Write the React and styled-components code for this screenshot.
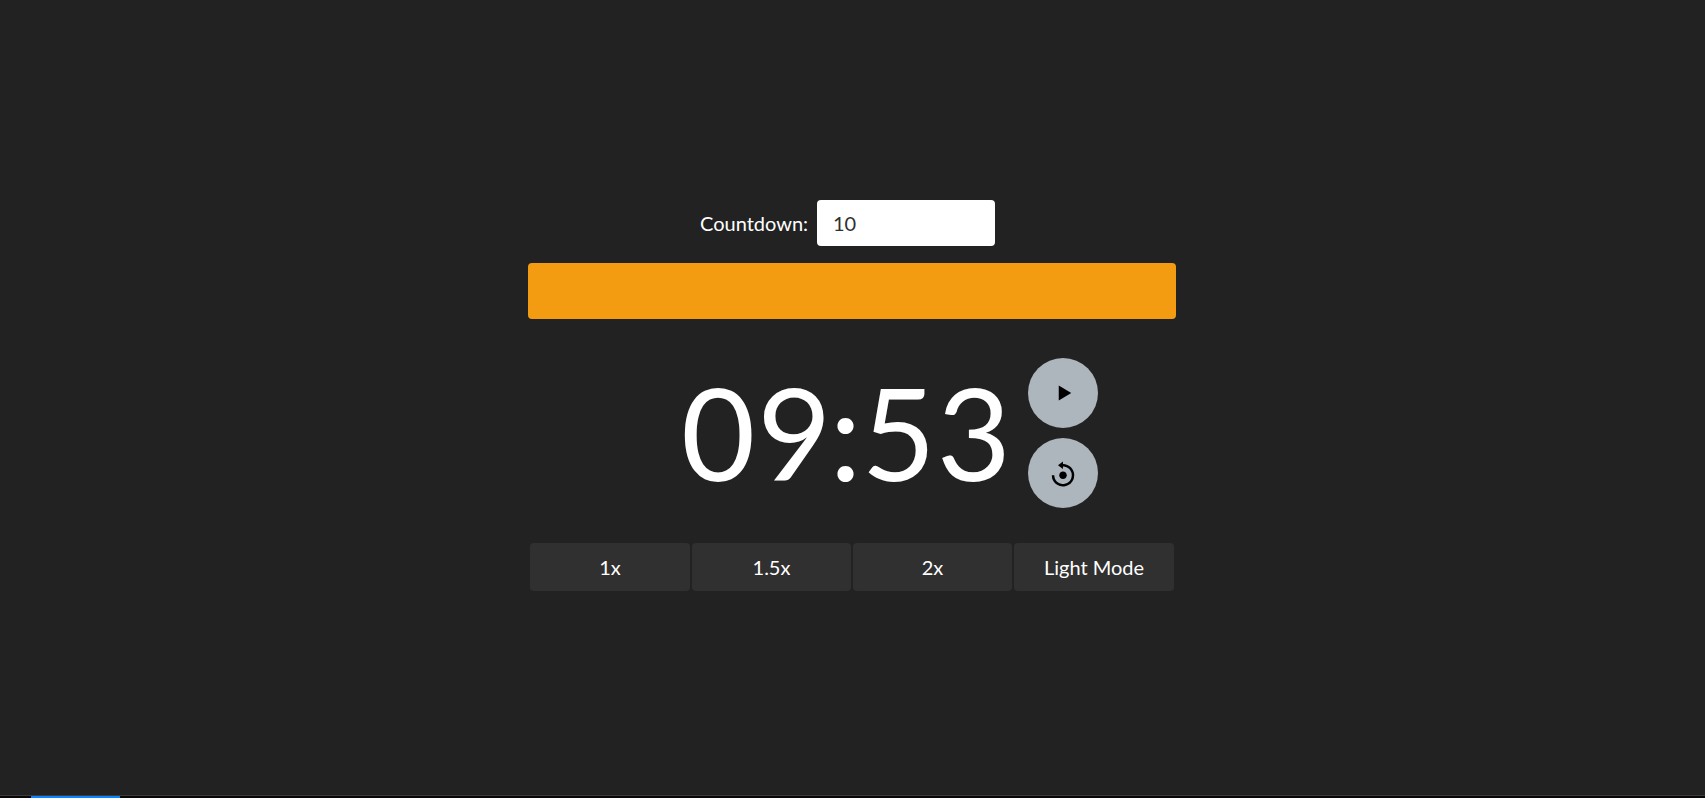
import React, { useState } from "react";
import styled, { createGlobalStyle } from "styled-components";
import { BiPlay, BiReset } from "react-icons/bi";

const GlobalStyle = createGlobalStyle`
  *, *::before, *::after { box-sizing: border-box; }
  body {
    margin: 0;
    background: #222;
    color: #fff;
    font-family: Lato, "Liberation Sans", sans-serif;
    font-size: 20px;
    line-height: 1.5;
  }
`;

const Page = styled.div`
  display: flex;
  flex-direction: column;
  height: 100vh;
  overflow: hidden;
`;

const Timer = styled.main`
  flex: 1;
  display: flex;
  flex-direction: column;
  width: 648px;
  margin-left: 528px;
  padding-top: 200px;
`;

const CountdownRow = styled.label`
  display: flex;
  align-items: center;
  gap: 9px;
  height: 46px;
  margin-left: 172px;
`;

const CountdownLabel = styled.span`
  width: 108px;
  white-space: nowrap;
`;

const CountdownInput = styled.input`
  width: 178px;
  height: 46px;
  padding: 8px 16px;
  border: 0;
  border-radius: 4px;
  outline: 0;
  background: #fff;
  color: #303030;
  font: inherit;
`;

const ProgressBar = styled.div`
  height: 56px;
  margin-top: 17px;
  border-radius: 4px;
  background: #f39c12;
`;

const ClockRow = styled.div`
  display: flex;
  align-items: center;
  justify-content: space-between;
  height: 150px;
  margin: 39px 78px 0 153px;
`;

const Clock = styled.div`
  padding-bottom: 3px;
  font-size: 128px;
  line-height: 147px;
  white-space: nowrap;
`;

const Digit = styled.span`
  letter-spacing: ${(p) => p.$track}px;
`;

const Controls = styled.div`
  display: flex;
  flex-direction: column;
  gap: 10px;
`;

const RoundButton = styled.button`
  display: flex;
  align-items: center;
  justify-content: center;
  width: 70px;
  height: 70px;
  padding: ${(p) => p.$inset || "0"};
  border: 0;
  border-radius: 50%;
  background: #adb5bd;
  color: #000;
  font-size: 30px;
`;

const Options = styled.div`
  display: grid;
  grid-template-columns: 160px 159px 159px 160px;
  gap: 2px;
  margin: 35px 2px 0;
`;

const OptionButton = styled.button`
  height: 48px;
  padding: 0;
  border: 0;
  border-radius: 4px;
  background: #303030;
  color: #fff;
  font: inherit;
`;

const BottomStrip = styled.footer`
  flex: none;
  height: 3px;
  padding-left: 31px;
  border-top: 1px solid #3c3c3c;
  background: #0b0709;
`;

const ActiveMark = styled.div`
  width: 89px;
  height: 2px;
  background: #0a84ff;
`;

const options = ["1x", "1.5x", "2x", "Light Mode"];

export default function App() {
  const [minutes, setMinutes] = useState("10");
  return (
    <Page>
      <GlobalStyle />
      <Timer>
        <CountdownRow>
          <CountdownLabel>Countdown:</CountdownLabel>
          <CountdownInput value={minutes} onChange={(e) => setMinutes(e.target.value)} />
        </CountdownRow>
        <ProgressBar />
        <ClockRow>
          <Clock>
            <Digit $track={2}>0</Digit><Digit $track={-2}>9</Digit>:<Digit $track={1}>5</Digit>3
          </Clock>
          <Controls>
            <RoundButton aria-label="Start" $inset="0 0 0 4px"><BiPlay /></RoundButton>
            <RoundButton aria-label="Reset" $inset="2px 0 0"><BiReset /></RoundButton>
          </Controls>
        </ClockRow>
        <Options>
          {options.map((o) => <OptionButton key={o}>{o}</OptionButton>)}
        </Options>
      </Timer>
      <BottomStrip><ActiveMark /></BottomStrip>
    </Page>
  );
}
